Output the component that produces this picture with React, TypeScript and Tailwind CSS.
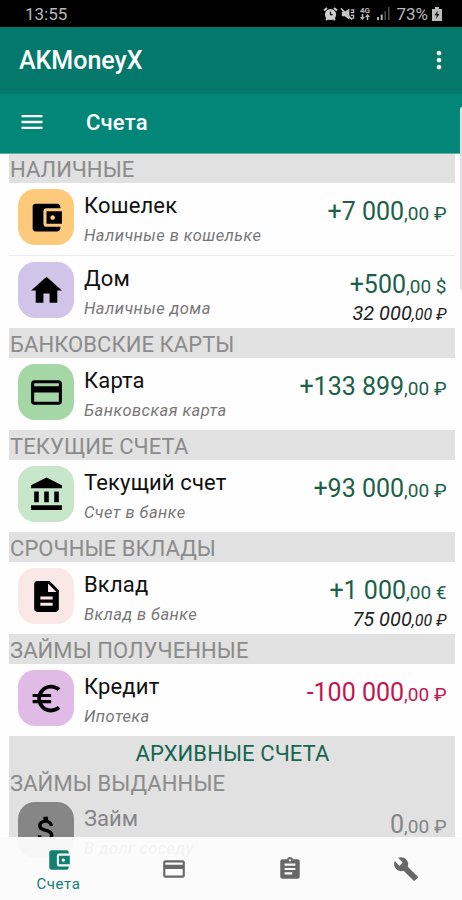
import React from "react";
import { IconType } from "react-icons";
import {
  MdAccountBalance,
  MdAccountBalanceWallet,
  MdAssignment,
  MdAttachMoney,
  MdBuild,
  MdDescription,
  MdEuroSymbol,
  MdHome,
  MdMenu,
  MdMoreVert,
  MdPayment,
} from "react-icons/md";

interface Money {
  whole: string;
  cents: string;
}

interface Account {
  name: string;
  note: string;
  icon: IconType;
  tile: string;
  amount: Money;
  amountColor: string;
  converted?: Money;
}

interface Group {
  title: string;
  accounts: Account[];
}

const GREEN = "text-[#1c6048]";
const RED = "text-[#c4164f]";

const groups: Group[] = [
  {
    title: "НАЛИЧНЫЕ",
    accounts: [
      {
        name: "Кошелек",
        note: "Наличные в кошельке",
        icon: MdAccountBalanceWallet,
        tile: "bg-[#fdca7c]",
        amount: { whole: "+7 000", cents: ",00 ₽" },
        amountColor: GREEN,
      },
      {
        name: "Дом",
        note: "Наличные дома",
        icon: MdHome,
        tile: "bg-[#d0c4e8]",
        amount: { whole: "+500", cents: ",00 $" },
        amountColor: GREEN,
        converted: { whole: "32 000", cents: ",00 ₽" },
      },
    ],
  },
  {
    title: "БАНКОВСКИЕ КАРТЫ",
    accounts: [
      {
        name: "Карта",
        note: "Банковская карта",
        icon: MdPayment,
        tile: "bg-[#a4d6a6]",
        amount: { whole: "+133 899", cents: ",00 ₽" },
        amountColor: GREEN,
      },
    ],
  },
  {
    title: "ТЕКУЩИЕ СЧЕТА",
    accounts: [
      {
        name: "Текущий счет",
        note: "Счет в банке",
        icon: MdAccountBalance,
        tile: "bg-[#c8e6c9]",
        amount: { whole: "+93 000", cents: ",00 ₽" },
        amountColor: GREEN,
      },
    ],
  },
  {
    title: "СРОЧНЫЕ ВКЛАДЫ",
    accounts: [
      {
        name: "Вклад",
        note: "Вклад в банке",
        icon: MdDescription,
        tile: "bg-[#fae8e6]",
        amount: { whole: "+1 000", cents: ",00 €" },
        amountColor: GREEN,
        converted: { whole: "75 000", cents: ",00 ₽" },
      },
    ],
  },
  {
    title: "ЗАЙМЫ ПОЛУЧЕННЫЕ",
    accounts: [
      {
        name: "Кредит",
        note: "Ипотека",
        icon: MdEuroSymbol,
        tile: "bg-[#dfbbe6]",
        amount: { whole: "-100 000", cents: ",00 ₽" },
        amountColor: RED,
      },
    ],
  },
];

const AccountRow: React.FC<{ account: Account }> = ({ account }) => {
  const Icon = account.icon;

  return (
    <div className="box-content flex h-[66px] items-start pl-[9px] pr-[8.5px] pt-[6px]">
      <div
        className={`flex h-14 w-14 shrink-0 items-center justify-center rounded-[17px] text-black ${account.tile}`}
      >
        <Icon size={37} />
      </div>
      <div className="ml-[10px] flex-1 whitespace-nowrap">
        <div className="mt-px h-8 text-[22px] leading-8 tracking-[0.15px] text-[#111]">
          {account.name}
        </div>
        <div className="h-7 text-[16.5px] italic leading-7 tracking-[0.45px] text-[#777]">
          {account.note}
        </div>
      </div>
      <div className="whitespace-nowrap text-right">
        <div
          className={`mt-[7px] h-8 text-[25px] leading-8 ${account.amountColor}`}
        >
          {account.amount.whole}
          <span className="text-[19px]">{account.amount.cents}</span>
        </div>
        {account.converted && (
          <div className="-mt-[2px] h-7 text-[20px] italic leading-7 text-[#222]">
            {account.converted.whole}
            <span className="text-[16px]">{account.converted.cents}</span>
          </div>
        )}
      </div>
    </div>
  );
};

const StatusBar: React.FC = () => (
  <div className="flex h-[27px] items-center bg-black pl-[25px] pr-5 text-[17px] leading-none text-[#b9b9b9]">
    <span className="mt-px">13:55</span>
    <div className="ml-auto flex items-center">
      {/* Alarm */}
      <svg width="15" height="14" viewBox="0 0 15 14" className="mr-[2px]">
        <path d="M1 3.5 4 1M14 3.5 11 1" stroke="#cfcfcf" strokeWidth="2" />
        <circle cx="7.5" cy="7.5" r="5.6" fill="#cfcfcf" />
        <path d="M3 13l2-2M12 13l-2-2" stroke="#cfcfcf" strokeWidth="2" />
        <path d="M7.5 4.5v3.2h2.3" stroke="#111" strokeWidth="1.2" fill="none" />
      </svg>
      {/* Muted speaker */}
      <svg width="15" height="14" viewBox="0 0 16 14" className="mr-1">
        <path d="M2 4.5h3L10 1v12L5 9.5H2z" fill="#c4c4c4" />
        <path d="M1 1l12 12" stroke="#c4c4c4" strokeWidth="1.6" />
        <path
          d="M11.5 2.5h3v3h-3M11.5 8.5h3v3h-2"
          stroke="#c4c4c4"
          strokeWidth="1.3"
          fill="none"
        />
      </svg>
      {/* Network type */}
      <div className="mr-[7px] flex w-[11px] flex-col items-center">
        <span className="text-[8px] font-bold leading-[7px]">4G</span>
        <svg width="10" height="6" viewBox="0 0 10 6" fill="#b9b9b9">
          <path d="M2.5 6 0 3h1.7V0h1.6v3H5zM7.5 0 10 3H8.3v3H6.7V3H5z" />
        </svg>
      </div>
      {/* Signal */}
      <svg width="13" height="13" viewBox="0 0 13 13" className="mr-[6px]">
        <path d="M0 10h2v3H0zM3.7 7.5h2V13h-2z" fill="#b5b5b5" />
        <path d="M7.4 4h1.6v9H7.4zM11 0h1.6v13H11z" fill="#4a4a4a" />
      </svg>
      <span className="mt-px">73%</span>
      {/* Battery */}
      <svg width="10" height="14" viewBox="0 0 10 14" className="ml-1">
        <path d="M3 0h4v2h3v12H0V2h3z" fill="#bdbdbd" />
        <path d="M5.8 3.5 2.5 8.3h2.2l-.5 3.5 3.3-4.8H5.3z" fill="#111" />
      </svg>
    </div>
  </div>
);

const App: React.FC = () => {
  return (
    <div className="relative flex h-[900px] w-[462px] flex-col overflow-hidden bg-[#fefefe] font-['Roboto',sans-serif]">
      <StatusBar />

      <header className="flex h-[67px] items-center justify-between bg-[#04796b] pb-px pl-[19px] pr-[9px] text-white">
        <h1 className="text-[25px] font-medium leading-none">AKMoneyX</h1>
        <MdMoreVert size={28} />
      </header>
      <div className="flex h-[60px] shrink-0 items-center border-b border-[#5fb0a5] bg-[#018677] pb-[3px] pl-[18px] text-white">
        <MdMenu size={28} />
        <h2 className="ml-10 pt-[2px] text-[22px] font-medium leading-none tracking-[0.2px]">
          Счета
        </h2>
      </div>

      <main className="ml-[9px] mr-[7px] flex-1 overflow-hidden">
        {groups.map((group) => (
          <section key={group.title} className="first:-mt-px">
            <div className="flex h-[30px] items-center whitespace-nowrap bg-[#e1e1e1] pl-px pt-[3px] text-[22px] leading-none tracking-[0.08px] text-[#8b8b8b]">
              {group.title}
            </div>
            <div className="divide-y divide-[#ececec]">
              {group.accounts.map((account) => (
                <AccountRow key={account.name} account={account} />
              ))}
            </div>
          </section>
        ))}

        {/* Archived accounts */}
        <section className="h-[101px] bg-[#e1e1e1]">
          <div className="flex h-[33px] items-center justify-center pl-px pt-px text-[22px] tracking-[0.1px] text-[#14664f]">
            АРХИВНЫЕ СЧЕТА
          </div>
          <div className="flex h-[27px] items-center pl-px pt-px text-[22px] tracking-[0.1px] text-[#8b8b8b]">
            ЗАЙМЫ ВЫДАННЫЕ
          </div>
          <div className="flex h-[41px] items-start overflow-hidden pl-[9px] pr-[8.5px] pt-[6px]">
            <div className="flex h-14 w-14 shrink-0 items-center justify-center rounded-[17px] bg-[#868686] text-black">
              <MdAttachMoney size={37} />
            </div>
            <div className="ml-[10px] mt-px flex-1 text-[22px] leading-8 text-[#858585]">
              Займ
            </div>
            <div className="mt-[12px] text-[25px] leading-[22px] text-[#858585]">
              0<span className="text-[19px]">,00 ₽</span>
            </div>
          </div>
        </section>
      </main>

      <nav className="relative flex h-[63px] shrink-0 bg-[#fbfbfb] text-[#686868]">
        {/* Row content that shows faintly through the bar */}
        <div className="absolute left-[18px] top-0 h-[21px] w-14 rounded-b-[17px] bg-[#f7f7f7]" />
        <div className="absolute left-[84px] top-0 text-[16.5px] italic leading-6 tracking-[0.4px] text-[#f3f3f3]">
          В долг соседу
        </div>
        <div className="relative flex w-[116px] flex-col items-center pl-px pt-[10px] text-[#128070]">
          <MdAccountBalanceWallet size={26} />
          <span className="pt-px text-[15px] leading-5 tracking-[0.6px]">
            Счета
          </span>
        </div>
        <div className="relative flex w-[116px] items-center justify-center">
          <MdPayment size={26} />
        </div>
        <div className="flex w-[116px] items-center justify-center">
          <MdAssignment size={26} />
        </div>
        <div className="flex flex-1 items-center justify-center pl-[2px]">
          <MdBuild size={26} />
        </div>
      </nav>

      {/* Edge panel handle */}
      <div className="absolute right-0 top-[107px] h-[183px] w-[2px] rounded-l bg-[#d9e2e1]" />
    </div>
  );
};

export default App;
